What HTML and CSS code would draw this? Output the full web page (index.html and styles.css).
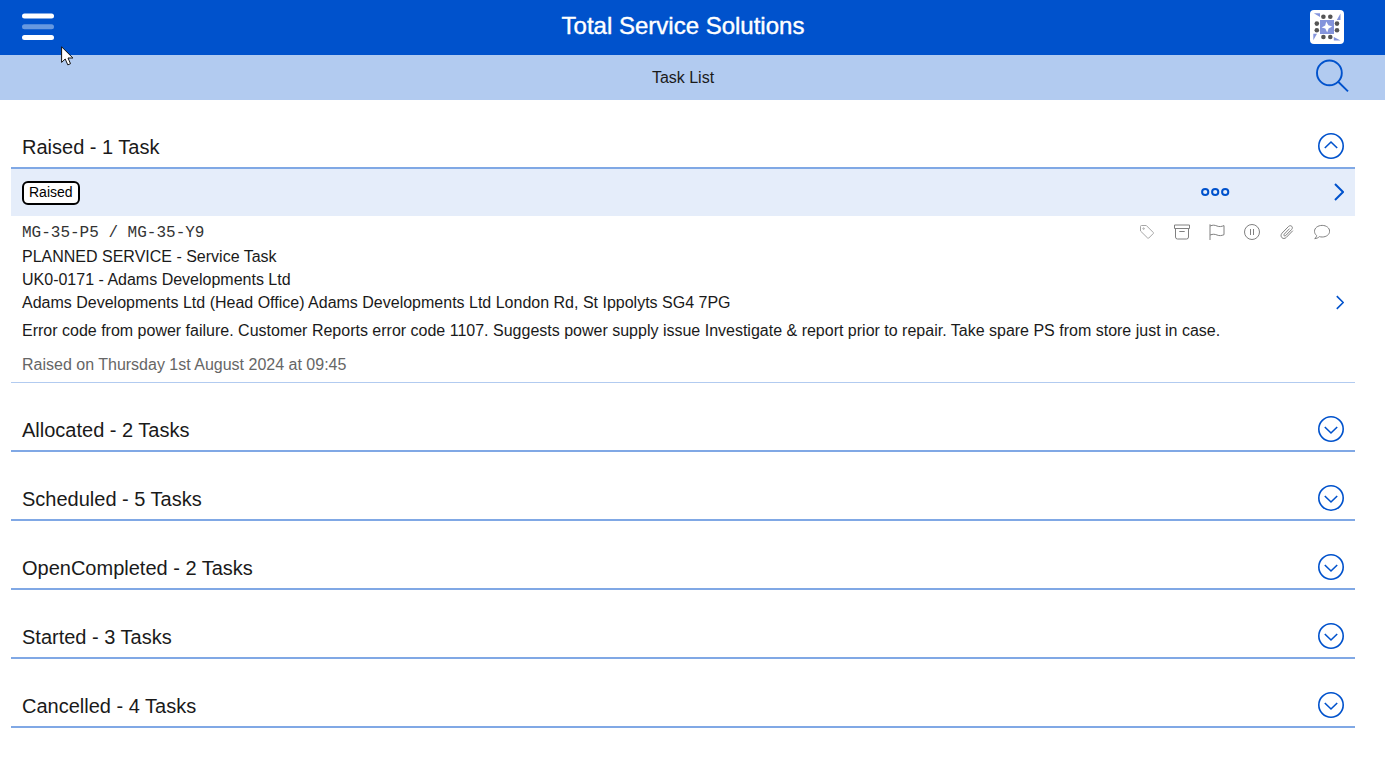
FILE: index.html
```html
<!DOCTYPE html>
<html lang="en">
<head>
    <meta charset="UTF-8">
    <meta name="viewport" content="width=device-width, initial-scale=1.0">
    <title>Task List</title>
    <link rel="stylesheet" href="styles.css">
</head>
<body>

    <!-- Shared icons -->
    <svg class="sprite" aria-hidden="true">
        <symbol id="up" viewBox="0 0 26 26">
            <circle cx="13" cy="13" r="12.2"/>
            <path d="M6.8 15 L13 9 L19.2 15"/>
        </symbol>
        <symbol id="down" viewBox="0 0 26 26">
            <circle cx="13" cy="13" r="12.2"/>
            <path d="M6.8 11 L13 17 L19.2 11"/>
        </symbol>
        <symbol id="right" viewBox="0 0 10 18">
            <path d="M1 1 L9 9 L1 17"/>
        </symbol>
    </svg>

    <header class="topbar">
        <button type="button" class="icon-btn" aria-label="Menu">
            <svg width="32" height="28" viewBox="0 0 32 28">
                <rect x="0" y="0.5" width="32" height="5" rx="2.5" fill="#fff"/>
                <rect x="0" y="11.2" width="32" height="5" rx="2.5" fill="#6698e0"/>
                <rect x="0" y="22" width="32" height="5" rx="2.5" fill="#fff"/>
            </svg>
        </button>
        <h1>Total Service Solutions</h1>
        <a href="#" class="logo" aria-label="Home">
            <svg width="34" height="34" viewBox="0 0 34 34">
                <rect width="34" height="34" rx="4" fill="#fff"/>
                <g fill="#8494dc">
                    <rect x="10" y="10" width="14" height="14"/>
                    <path d="M3.8 3.3 H10 V7 Z"/>
                    <path d="M30.5 3.5 V10 H26.8 Z"/>
                    <path d="M3.3 23.8 H7 L3.3 30.3 Z"/>
                    <path d="M23.8 27 L30.6 30.6 H23.8 Z"/>
                </g>
                <g fill="#555">
                    <circle cx="13.4" cy="6.7" r="2.3"/>
                    <circle cx="20.3" cy="6.7" r="2.3"/>
                    <circle cx="13.4" cy="27" r="2.3"/>
                    <circle cx="20.3" cy="27" r="2.3"/>
                    <circle cx="6.8" cy="13.6" r="2.3"/>
                    <circle cx="6.8" cy="20.3" r="2.3"/>
                    <circle cx="27" cy="13.6" r="2.3"/>
                    <circle cx="27" cy="20.3" r="2.3"/>
                </g>
                <path d="M16.2 11.5 L18.4 15.2 L22.3 16.4 L18.6 18.4 L17.2 22.5 L15.3 18.6 L11.6 17.4 L15.2 15.5 Z" fill="#fff"/>
            </svg>
        </a>
    </header>

    <div class="subbar">
        <h2>Task List</h2>
        <button type="button" class="icon-btn search" aria-label="Search">
            <svg width="34" height="34" viewBox="0 0 34 34" fill="none" stroke="#0052cc" stroke-width="1.9">
                <circle cx="13.4" cy="13.9" r="12.4"/>
                <path d="M22.2 22.8 L32 32.4"/>
            </svg>
        </button>
    </div>

    <main>
        <!-- Raised -->
        <section class="group">
            <div class="group-head">
                <h3>Raised - 1 Task</h3>
                <button type="button" class="icon-btn" aria-label="Collapse Raised"><svg class="round"><use href="#up"/></svg></button>
            </div>
            <article>
                <div class="task-bar">
                    <span class="badge">Raised</span>
                    <div class="task-actions">
                        <button type="button" class="icon-btn" aria-label="More">
                            <svg width="30" height="10" viewBox="0 0 30 10" fill="none" stroke="#0052cc" stroke-width="2">
                                <circle cx="5.2" cy="5" r="3.1"/>
                                <circle cx="15.2" cy="5" r="3.1"/>
                                <circle cx="25.2" cy="5" r="3.1"/>
                            </svg>
                        </button>
                        <button type="button" class="icon-btn" aria-label="Open task"><svg class="chevron"><use href="#right"/></svg></button>
                    </div>
                </div>
                <div class="task-body">
                    <div class="line">
                        <span class="code">MG-35-P5 / MG-35-Y9</span>
                        <div class="flags">
                            <svg class="light" viewBox="0 0 16 16"><path d="M1.5 2.5 Q1.5 1.5 2.5 1.5 H7.3 L14.3 8.5 Q14.8 9 14.3 9.5 L9.8 14 Q9.2 14.6 8.6 14 L1.5 7 Z"/><circle cx="4.6" cy="4.6" r="0.7"/></svg>
                            <svg viewBox="0 0 16 16"><path d="M0.5 1 H15.5 V4.5 H0.5 Z M1.5 4.5 V13 Q1.5 15 3.5 15 H12.5 Q14.5 15 14.5 13 V4.5 M5.3 7.5 H10.7"/></svg>
                            <svg viewBox="0 0 16 16"><path d="M1 0.3 V16 M1 2 C4 0.8 5.5 1 8 2 C10.5 3 12.5 2.6 15 1.6 V10.7 C12.5 11.7 10.5 12 8 11 C5.5 10 4 10 1 11"/></svg>
                            <svg viewBox="0 0 16 16"><circle cx="8" cy="8" r="7.5"/><path d="M6.5 5 V11 M9.5 5 V11"/></svg>
                            <svg viewBox="0 0 16 16"><path d="M10.6 4.6 L5.2 10.2 C4.2 11.4 5.6 12.7 6.7 11.6 L12.7 5.4 C14.6 3.2 12 0.4 9.6 2.4 L3 9.2 C0.2 12.6 4.2 16.4 7.3 13.4 L13.8 6.7"/></svg>
                            <svg viewBox="0 0 16 16"><path d="M2.6 11.5 C1.2 10.3 0.5 8.9 0.5 7.3 C0.5 4 3.8 1.4 8.2 1.4 C12.4 1.4 15.6 4 15.6 7.2 C15.6 10.5 12.4 13 8.2 13 C7.2 13 6.3 12.9 5.5 12.6 C4.2 13.8 2.7 14.5 0.7 14.6 C1.9 13.6 2.6 12.6 2.6 11.5 Z"/></svg>
                        </div>
                    </div>
                    <p>PLANNED SERVICE - Service Task</p>
                    <p>UK0-0171 - Adams Developments Ltd</p>
                    <div class="line">
                        <p>Adams Developments Ltd (Head Office) Adams Developments Ltd London Rd, St Ippolyts SG4 7PG</p>
                        <a href="#" class="go" aria-label="Open address"><svg class="chevron small"><use href="#right"/></svg></a>
                    </div>
                    <p class="note">Error code from power failure. Customer Reports error code 1107. Suggests power supply issue Investigate &amp; report prior to repair. Take spare PS from store just in case.</p>
                    <p class="date">Raised on Thursday 1st August 2024 at 09:45</p>
                </div>
            </article>
        </section>

        <!-- Closed groups -->
        <section class="group">
            <div class="group-head">
                <h3>Allocated - 2 Tasks</h3>
                <button type="button" class="icon-btn" aria-label="Expand Allocated"><svg class="round"><use href="#down"/></svg></button>
            </div>
        </section>
        <section class="group">
            <div class="group-head">
                <h3>Scheduled - 5 Tasks</h3>
                <button type="button" class="icon-btn" aria-label="Expand Scheduled"><svg class="round"><use href="#down"/></svg></button>
            </div>
        </section>
        <section class="group">
            <div class="group-head">
                <h3>OpenCompleted - 2 Tasks</h3>
                <button type="button" class="icon-btn" aria-label="Expand OpenCompleted"><svg class="round"><use href="#down"/></svg></button>
            </div>
        </section>
        <section class="group">
            <div class="group-head">
                <h3>Started - 3 Tasks</h3>
                <button type="button" class="icon-btn" aria-label="Expand Started"><svg class="round"><use href="#down"/></svg></button>
            </div>
        </section>
        <section class="group">
            <div class="group-head">
                <h3>Cancelled - 4 Tasks</h3>
                <button type="button" class="icon-btn" aria-label="Expand Cancelled"><svg class="round"><use href="#down"/></svg></button>
            </div>
        </section>
    </main>

    <svg class="pointer" width="13" height="20" viewBox="0 0 13 20" aria-hidden="true">
        <path d="M0.6 0.8 V16.4 L4.2 13 L6.8 18.9 L9.5 17.7 L7 12 H11.9 Z" fill="#fff" stroke="#111" stroke-width="1"/>
    </svg>

</body>
</html>
```
FILE: styles.css
```css
* {
    box-sizing: border-box;
    margin: 0;
    padding: 0;
}

body {
    font-family: "Liberation Sans", Arial, sans-serif;
    font-size: 16px;
    line-height: 23px;
    color: #1a1a1a;
    background-color: #fff;
}

h1, h2, h3 {
    font-weight: normal;
}

svg {
    display: block;
}

.sprite {
    position: absolute;
    width: 0;
    height: 0;
}

.icon-btn {
    display: block;
    background: none;
    border: none;
    cursor: pointer;
}

.topbar, .subbar {
    display: grid;
    grid-template-columns: 1fr auto 1fr;
    align-items: center;
}

.topbar {
    height: 55px;
    padding: 0 41px 2px 22px;
    background-color: #0052cc;
    color: #fff;
}

.topbar .icon-btn {
    justify-self: start;
}

.topbar h1 {
    font-size: 24px;
    line-height: 28px;
    padding-bottom: 2px;
    -webkit-text-stroke: 0.4px #fff;
}

.logo {
    justify-self: end;
}

.subbar {
    height: 45px;
    padding: 0 35px 0 16px;
    background-color: #b2cbf0;
}

.subbar h2 {
    grid-column: 2;
    font-size: 16px;
}

.search {
    justify-self: end;
    padding-bottom: 4px;
}

main {
    padding: 0 30px 24px 11px;
}

.group-head {
    display: flex;
    justify-content: space-between;
    align-items: center;
    height: 44px;
    margin-top: 25px;
    padding: 0 11px;
    border-bottom: 2px solid #80a8e5;
}

.group-head h3 {
    font-size: 20px;
    padding-top: 2px;
}

.round, .chevron {
    fill: none;
    stroke: #0052cc;
}

.round {
    width: 26px;
    height: 26px;
    stroke-width: 1.6;
}

.chevron {
    width: 10px;
    height: 18px;
    stroke-width: 2;
}

.chevron.small {
    width: 8px;
    height: 15px;
}

.task-bar {
    display: flex;
    justify-content: space-between;
    align-items: center;
    height: 47px;
    padding: 0 11px;
    background-color: #e5edfa;
}

.badge {
    font-size: 14px;
    line-height: 18px;
    padding: 0 5px;
    height: 24px;
    border: 2px solid #000;
    border-radius: 6px;
    background-color: #fff;
    color: #000;
}

.task-actions {
    display: flex;
    align-items: center;
    gap: 104px;
    padding-bottom: 2px;
}

.task-body {
    padding: 6px 11px;
    border-bottom: 1px solid #b2cbf0;
}

.line {
    display: flex;
    justify-content: space-between;
    align-items: center;
}

.code {
    font-family: "Liberation Mono", "Courier New", monospace;
    font-size: 16px;
    color: #333;
}

.flags {
    display: flex;
    gap: 19px;
    padding: 0 14px 4px 0;
}

.flags svg {
    width: 16px;
    height: 16px;
    fill: none;
    stroke: #808080;
    stroke-width: 1;
}

.flags .light {
    stroke: #a6a6a6;
}

.note {
    margin-top: 5px;
}

.date {
    margin-top: 11px;
    color: #666;
}

.pointer {
    position: absolute;
    left: 61px;
    top: 46px;
}
```
